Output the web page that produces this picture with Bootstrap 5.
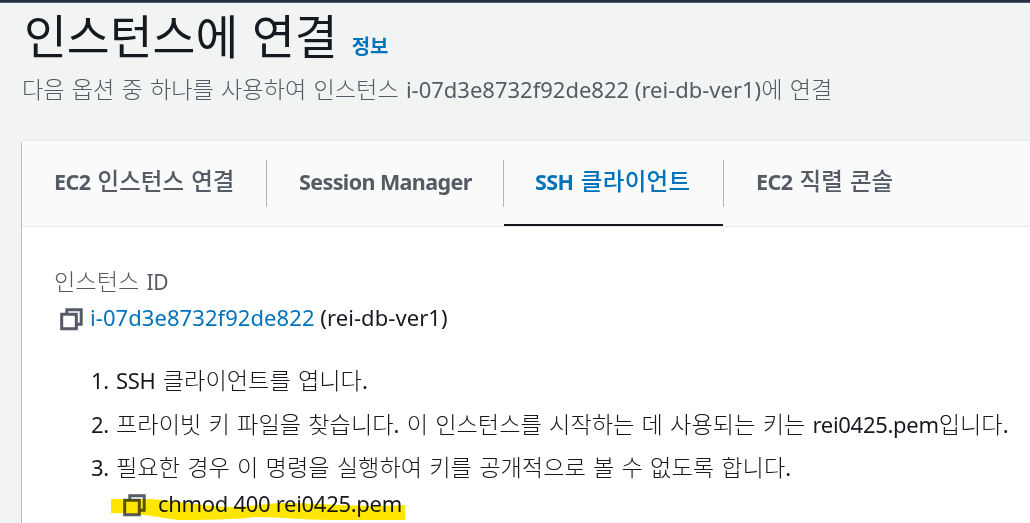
<!DOCTYPE html>
<html lang="ko">
<head>
<meta charset="utf-8">
<meta name="viewport" content="width=device-width, initial-scale=1">
<title>인스턴스에 연결</title>
<link rel="stylesheet" href="https://cdn.jsdelivr.net/npm/bootstrap@5.3.0/dist/css/bootstrap.min.css">
<style>
  body { background:#f2f4f3; color:#16191f; font:300 23.2px/32px "Noto Sans CJK KR", sans-serif; word-spacing:.6px; overflow:hidden; height:523px; }
  .latin { font-family:"Noto Sans", sans-serif; font-weight:400; font-size:22px; line-height:1; word-spacing:0; }
  .tight { letter-spacing:-.3px; }
  .topbar { height:3px; background:#232f3e; border-bottom:1px solid #55606c; }
  .page-title { font-size:46.6px; line-height:60px; font-weight:400; margin:1px 0 0; }
  .info-link { font-size:20px; font-weight:700; line-height:1; color:#0073bb; text-decoration:none; margin-left:14px; }
  .subtitle { padding:8px 0 0 22px; }
  .muted { color:#545b64; }
  .muted .tight { font-size:21px; }
  .panel { margin:37px 0 0 22px; background:#fff; height:400px; box-shadow:0 -1px 0 #e6eae9, -1px 1px 0 #b9bdbd; }
  .tabs { background:#fafafa; height:86px; border-bottom:1px solid #e3e9e8; }
  .tab { position:relative; height:47px; margin-top:19px; border-right:1px solid #aab7b8; padding-left:32px; font-size:23.5px; line-height:40px; font-weight:500; color:#545b64; text-decoration:none; white-space:nowrap; }
  .tab .latin { font-weight:700; font-size:21.5px; letter-spacing:-.6px; }
  .tab.active { color:#0073bb; padding-left:31px; letter-spacing:.3px; }
  .tab.active::after { content:""; position:absolute; left:0; right:0; bottom:-19px; height:2px; background:#16191f; }
  .t1 { width:245px; } .t2 { width:237px; } .t3 { width:220px; } .t4 { width:300px; border:0; }
  .details { padding:37px 0 0 32px; white-space:nowrap; }
  .id-row { height:32px; margin-top:5px; padding-left:6px; }
  .id-row .latin { letter-spacing:.07px; }
  .instance { color:#0073bb; text-decoration:none; }
  .steps { margin:30px 0 0 37px; }
  .steps > li { display:flex; margin-bottom:11.5px; word-spacing:.7px; }
  .num { width:25px; flex:none; }
  .steps > .command { margin:-5.5px 0 0 32px; }
  .marker { left:-12px; top:10px; mix-blend-mode:multiply; }
  .copy { fill:none; stroke:#545b64; stroke-width:3; flex:none; margin-top:6px; }
  .id-row .copy { margin-right:6px; }
  .command .copy { margin-right:11px; }
</style>
</head>
<body>
<div class="topbar"></div>
<header class="ps-4">
  <h1 class="page-title d-flex align-items-baseline"><span>인스턴스에 연결</span><a class="info-link" href="#">정보</a></h1>
</header>
<div class="subtitle muted text-nowrap">다음 옵션 중 하나를 사용하여 인스턴스 <span class="latin">i-07d3e8732f92de822 (rei-db-ver1)</span>에 연결</div>
<main class="panel">
  <nav class="tabs d-flex">
    <a class="tab t1" href="#"><span class="latin">EC2</span> 인스턴스 연결</a>
    <a class="tab t2" href="#"><span class="latin">Session Manager</span></a>
    <a class="tab t3 active" href="#"><span class="latin">SSH</span> 클라이언트</a>
    <a class="tab t4" href="#"><span class="latin">EC2</span> 직렬 콘솔</a>
  </nav>
  <section class="details">
    <div class="muted">인스턴스 <span class="latin tight">ID</span></div>
    <div class="id-row d-flex align-items-center">
      <svg class="copy" width="24" height="24" viewBox="0 0 24 24"><path d="M1.700 6.200h14.600v14.600H1.700z M6.800 6.200V1.800H21.200V16.200H16.300"/></svg>
      <span class="latin"><a class="instance" href="#">i-07d3e8732f92de822</a> (rei-db-ver1)</span>
    </div>
    <ol class="steps list-unstyled">
      <li><span class="num"><span class="latin tight">1.</span></span><span><span class="latin tight">SSH</span> 클라이언트를 엽니다<span class="latin">.</span></span></li>
      <li><span class="num"><span class="latin tight">2.</span></span><span>프라이빗 키 파일을 찾습니다<span class="latin">.</span> 이 인스턴스를 시작하는 데 사용되는 키는 <span class="latin tight">rei0425.pem</span>입니다<span class="latin">.</span></span></li>
      <li><span class="num"><span class="latin tight">3.</span></span><span>필요한 경우 이 명령을 실행하여 키를 공개적으로 볼 수 없도록 합니다<span class="latin">.</span></span></li>
      <li class="command position-relative align-items-center">
        <svg class="copy" width="24" height="24" viewBox="0 0 24 24"><path d="M1.700 6.200h14.600v14.600H1.700z M6.800 6.200V1.800H21.200V16.200H16.300"/></svg>
        <span class="latin tight">chmod 400 rei0425.pem</span>
        <svg class="marker position-absolute" width="296" height="24" viewBox="0 0 296 24"><path fill="#ffe600" d="M0 1H40C70 3 95 9 125 9C145 8 155 5 175 5C210 5 250 10 294 7V22H220C190 22 170 19 145 19C120 22 80 22 67 22C50 20 40 16 0 15Z"/></svg>
      </li>
    </ol>
  </section>
</main>
<script src="https://cdn.jsdelivr.net/npm/bootstrap@5.3.0/dist/js/bootstrap.bundle.min.js"></script>
</body>
</html>
